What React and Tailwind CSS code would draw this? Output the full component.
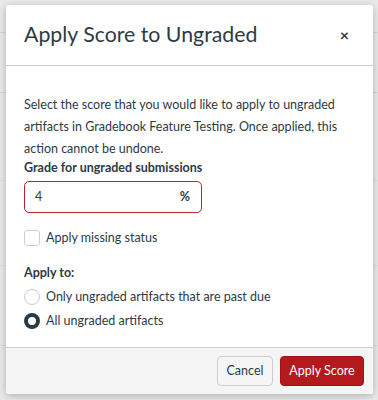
import React from "react";

export default function App() {
  return (
    <div className="relative w-[378px] h-[400px] overflow-hidden bg-[#e9eaeb]" style={{ fontFamily: "Lato, 'Noto Sans', sans-serif" }}>
      {/* faint background page */}
      <div className="absolute left-0 right-0 top-[32px] h-px bg-[#d6d8da]" />
      <div className="absolute left-0 right-0 top-[92px] h-px bg-[#d6d8da]" />
      <div className="absolute left-0 right-0 top-[180px] h-px bg-[#dcdedf]" />
      <div className="absolute left-0 right-0 top-[265px] h-px bg-[#dcdedf]" />
      <div className="absolute left-0 right-0 top-[345px] h-px bg-[#dcdedf]" />

      <div className="absolute left-[6px] top-[5px] w-[367px] h-[389px] bg-white rounded-[3px] shadow-[0_2px_8px_rgba(0,0,0,0.25)] flex flex-col text-[#2d3b45] overflow-hidden">
        <div className="h-[61px] shrink-0 flex items-center justify-between pl-[18px] pr-[24px] border-b border-[#c7cdd1]">
          <h1 className="text-[21.3px] font-normal leading-none">Apply Score to Ungraded</h1>
          <span className="text-[16px] font-bold leading-none">×</span>
        </div>
        <div className="flex-1 px-[18px] pt-[28px] text-[12.5px]">
          <p className="leading-[22px]">
            Select the score that you would like to apply to ungraded artifacts in Gradebook Feature Testing. Once applied, this action cannot be undone.
          </p>
          <div className="-mt-[1px] font-bold leading-[18px]">Grade for ungraded submissions</div>
          <div className="mt-[4px] w-[178px] h-[32px] rounded-[5px] border-[1.5px] border-[#b9262b] flex items-center justify-between pl-[10px] pr-[11px]">
            <span>4</span>
            <span className="font-bold">%</span>
          </div>
          <div className="mt-[14px] flex items-center gap-[6px] h-[22px]">
            <span className="w-[16px] h-[16px] rounded-[3px] border border-[#c7cdd1] bg-white" />
            <span>Apply missing status</span>
          </div>
          <div className="mt-[13px] font-bold leading-[22px]">Apply to:</div>
          <div className="mt-[2px] flex items-center gap-[6px] h-[22px]">
            <span className="w-[16px] h-[16px] rounded-full border border-[#c7cdd1] bg-white" />
            <span>Only ungraded artifacts that are past due</span>
          </div>
          <div className="mt-[2px] flex items-center gap-[6px] h-[22px]">
            <span className="w-[16px] h-[16px] rounded-full border-[4px] border-[#2d3b45] bg-white" />
            <span>All ungraded artifacts</span>
          </div>
        </div>
        <div className="h-[47px] shrink-0 bg-[#f5f5f5] border-t border-[#c7cdd1] flex items-center justify-end gap-[7px] pr-[9px]">
          <button className="h-[30px] w-[56px] rounded-[4px] border border-[#c7cdd1] bg-[#f5f5f5] text-[12.5px] text-[#2d3b45]">Cancel</button>
          <button className="h-[30px] w-[84px] rounded-[4px] border border-[#9d1518] bg-[#b4191d] text-[12.5px] text-white">Apply Score</button>
        </div>
      </div>
    </div>
  );
}
